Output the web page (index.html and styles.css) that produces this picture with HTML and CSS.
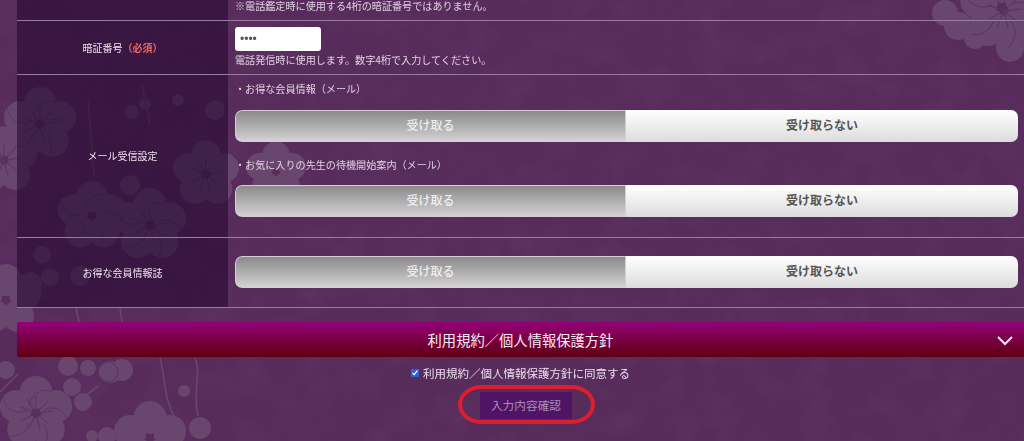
FILE: index.html
```html
<!DOCTYPE html>
<html lang="ja">
<head>
<meta charset="utf-8">
<title>会員登録</title>
<link rel="stylesheet" href="styles.css">
</head>
<body>
<svg class="wallpaper" width="1024" height="441" viewBox="0 0 1024 441" aria-hidden="true">
  <defs>
    <filter id="paper" x="0" y="0" width="100%" height="100%">
      <feTurbulence type="fractalNoise" baseFrequency="0.03" numOctaves="5" seed="11"/>
      <feColorMatrix values="0 0 0 0 0.2  0 0 0 0 0.08  0 0 0 0 0.24  1.8 0 0 0 -0.7"/>
    </filter>
    <g id="plum">
      <circle cx="0" cy="-25" r="20"/>
      <circle cx="24" cy="-8" r="20"/>
      <circle cx="15" cy="20" r="20"/>
      <circle cx="-15" cy="20" r="20"/>
      <circle cx="-24" cy="-8" r="20"/>
    </g>
    <g id="stamen" class="stamen">
      <path d="M0 0L0-17M0 0L12-12M0 0L17-2M0 0L13 11M0 0L4 17M0 0L-7 16M0 0L-15 8M0 0L-16-6M0 0L-9-14"/>
      <circle r="4"/>
    </g>
    <g id="petal-lines" class="petal-lines">
      <path d="M-8-9A20 20 0 0 1 20-26M10-4A20 20 0 0 1 38 8M9 13A20 20 0 0 1 6 42M-9 13A20 20 0 0 1-32 28M-11-3A20 20 0 0 1-40-20"/>
    </g>
  </defs>
  <rect class="paper" width="1024" height="441" filter="url(#paper)"/>
  <g class="blossoms">
    <use href="#plum" transform="translate(1002 8) scale(.95)"/>
    <circle cx="945" cy="13" r="13"/><circle cx="958" cy="26" r="14"/><circle cx="975" cy="38" r="11"/><circle cx="1010" cy="48" r="14"/>
    <use href="#plum" transform="translate(40 124) scale(.82)"/>
    <use href="#plum" transform="translate(4 160) scale(.75)"/>
    <use href="#plum" transform="translate(92 216) scale(.78)"/>
    <use href="#plum" transform="translate(150 225) scale(.82)"/>
    <use href="#plum" transform="translate(206 174) scale(.75)"/>
    <use href="#plum" transform="translate(276 172) scale(.68)"/>
    <use href="#plum" transform="translate(6 300) scale(.8)"/>
    <circle cx="132" cy="112" r="7"/><circle cx="145" cy="104" r="6"/><circle cx="178" cy="100" r="6"/>
    <circle cx="130" cy="185" r="10"/><circle cx="42" cy="255" r="9"/><circle cx="30" cy="284" r="12"/><circle cx="50" cy="277" r="9"/><circle cx="80" cy="276" r="10"/>
    <circle cx="215" cy="110" r="10"/>
    <use href="#plum" transform="translate(36 413) scale(.82)"/>
    <use href="#plum" transform="translate(150 438) scale(.82)"/>
    <circle cx="68" cy="366" r="10"/><circle cx="72" cy="387" r="9"/><circle cx="88" cy="368" r="8"/><circle cx="110" cy="372" r="11"/><circle cx="122" cy="370" r="11"/><circle cx="83" cy="402" r="9"/>
    <circle cx="184" cy="391" r="6"/><circle cx="200" cy="428" r="11"/><circle cx="6" cy="370" r="9"/><circle cx="107" cy="436" r="9"/><circle cx="92" cy="436" r="6"/>
    <path class="twig" d="M76 308L79 322M120 308L122 322M160 358C166 380 163 398 176 420M195 358C202 372 192 392 198 416M0 392L18 374M80 400L98 386M142 84L150 124M88 100L94 175"/>
  </g>
  <g class="outlines">
    <use href="#stamen" transform="translate(1004 11)"/>
    <use href="#stamen" transform="translate(40 124)"/>
    <use href="#stamen" transform="translate(150 225)"/>
    <use href="#stamen" transform="translate(206 174)"/>
    <use href="#stamen" transform="translate(36 413)"/>
    <use href="#stamen" transform="translate(4 160)"/>
    <use href="#petal-lines" transform="translate(1002 8) scale(.95)"/>
    <use href="#petal-lines" transform="translate(92 216) scale(.78)"/>
    <use href="#petal-lines" transform="translate(150 225) scale(.82)"/>
    <use href="#petal-lines" transform="translate(36 413) scale(.82)"/>
    <use href="#petal-lines" transform="translate(40 124) scale(.82)"/>
    <circle cx="108" cy="372" r="10"/>
  </g>
</svg>

<main class="page">
  <form class="form">
    <div class="row row-top">
      <div class="label"></div>
      <div class="field"><p class="note note-top">※電話鑑定時に使用する4桁の暗証番号ではありません。</p></div>
    </div>
    <div class="row">
      <div class="label">暗証番号<span class="required">（必須）</span></div>
      <div class="field field-pin">
        <input class="pin" type="password" value="1234" aria-label="暗証番号">
        <p class="note">電話発信時に使用します。数字4桁で入力してください。</p>
      </div>
    </div>
    <div class="row">
      <div class="label">メール受信設定</div>
      <div class="field field-mail">
        <p class="note">・お得な会員情報（メール）</p>
        <div class="toggle toggle-first"><span class="opt opt-on">受け取る</span><span class="opt opt-off">受け取らない</span></div>
        <p class="note note-second">・お気に入りの先生の待機開始案内（メール）</p>
        <div class="toggle toggle-second"><span class="opt opt-on">受け取る</span><span class="opt opt-off">受け取らない</span></div>
      </div>
    </div>
    <div class="row">
      <div class="label">お得な会員情報誌</div>
      <div class="field field-mag">
        <div class="toggle"><span class="opt opt-on">受け取る</span><span class="opt opt-off">受け取らない</span></div>
      </div>
    </div>

    <div class="accordion">
      <span>利用規約／個人情報保護方針</span>
      <svg class="chevron" width="16" height="11" viewBox="0 0 16 11" aria-hidden="true"><path d="M1 2l7 7 7-7"/></svg>
    </div>
  </form>

  <div class="agree">
    <label class="agree-label"><input class="agree-box" type="checkbox" checked>利用規約／個人情報保護方針に同意する</label>
    <div class="confirm-wrap">
      <button class="confirm" type="button">入力内容確認</button>
      <span class="callout"></span>
    </div>
  </div>
</main>
</body>
</html>
```

FILE: styles.css
```css
* {
  box-sizing: border-box;
}

html,
body {
  margin: 0;
  height: 441px;
  overflow: hidden;
  background: #572c5b;
}

body {
  position: relative;
  font-family: "Noto Sans CJK JP", "Noto Sans", sans-serif;
  color: #ecdfee;
}

.wallpaper {
  position: absolute;
  inset: 0;
  display: block;
}

.paper {
  opacity: 0.16;
}

.blossoms {
  fill: #68466e;
  stroke: none;
}

.twig {
  fill: none;
  stroke: #68466e;
  stroke-width: 1.6;
}

.outlines {
  fill: none;
  stroke: #573460;
  stroke-width: 1;
}

.stamen {
  stroke: #573460;
}

.page {
  position: relative;
  padding-left: 17px;
  filter: blur(0.35px);
}

.row {
  display: flex;
  border-bottom: 1px solid #9a7ca2;
}

.row-top {
  height: 21px;
}

.label {
  flex: 0 0 211px;
  display: flex;
  align-items: center;
  justify-content: center;
  background: rgba(36, 8, 48, 0.6);
  font-size: 10px;
  line-height: 16px;
  color: #eee4ee;
}

.required {
  color: #f2665e;
  font-weight: 700;
}

.field {
  flex: 1;
  min-width: 0;
  padding: 0 6px 0 7px;
}

.field-pin {
  padding-top: 6px;
  padding-bottom: 6px;
}

.field-mail {
  padding-top: 6px;
  padding-bottom: 20px;
}

.field-mag {
  padding-top: 18px;
  padding-bottom: 19px;
}

.note {
  margin: 0;
  font-size: 10.1px;
  line-height: 16px;
  color: #e0d2e2;
  white-space: nowrap;
}

.note-top {
  line-height: 11px;
}

.note-second {
  margin-top: 15px;
}

.pin {
  display: block;
  width: 86px;
  height: 24px;
  margin: 0 0 1px;
  padding: 0 5px;
  border: 0;
  border-radius: 3px;
  background: #fff;
  color: #555;
  font-family: "Liberation Sans", sans-serif;
  font-size: 12px;
}

.toggle {
  display: flex;
  height: 32px;
  border-radius: 7px;
  overflow: hidden;
}

.toggle-first {
  margin-top: 13px;
}

.toggle-second {
  margin-top: 12px;
}

.opt {
  display: flex;
  align-items: center;
  justify-content: center;
  padding-bottom: 3px;
  font-size: 12px;
  font-weight: 500;
}

.opt-on {
  flex: 0 0 391px;
  background: linear-gradient(#888888, #d6d4d6);
  color: #f1eef1;
  border-radius: 7px 0 0 7px;
  box-shadow: 0 0 0 1px #d8ccdb inset;
}

.opt-off {
  flex: 1;
  background: linear-gradient(#ffffff, #dcdcdc);
  color: #555;
  font-weight: 700;
}

.accordion {
  position: relative;
  display: flex;
  align-items: center;
  justify-content: center;
  height: 35px;
  margin-top: 14px;
  border-radius: 2px 0 0 2px;
  background: linear-gradient(#940078, #5e0010);
  color: #f7e9f3;
  font-size: 14.3px;
}

.chevron {
  position: absolute;
  right: 11px;
  top: 13px;
}

.chevron path {
  fill: none;
  stroke: #f7e6f2;
  stroke-width: 2;
}

.agree {
  display: flex;
  flex-direction: column;
  align-items: center;
  margin-top: 8px;
}

.agree-label {
  display: flex;
  align-items: center;
  gap: 4px;
  height: 16px;
  font-size: 11.5px;
  color: #ecdfee;
  white-space: nowrap;
}

.agree-box {
  width: 8px;
  height: 8px;
  margin: 0;
  accent-color: #2a62d4;
}

.confirm-wrap {
  position: relative;
  margin-top: 11px;
  margin-left: 11px;
}

.confirm {
  display: block;
  width: 92px;
  height: 27px;
  padding: 0 0 2px;
  border: 0;
  background: #4f1466;
  color: #a78fb4;
  font-family: inherit;
  font-size: 11.7px;
}

.callout {
  position: absolute;
  left: -22px;
  top: -7px;
  width: 137px;
  height: 39px;
  border: 4.5px solid #dc1f2e;
  border-radius: 24px / 20px;
}
```
